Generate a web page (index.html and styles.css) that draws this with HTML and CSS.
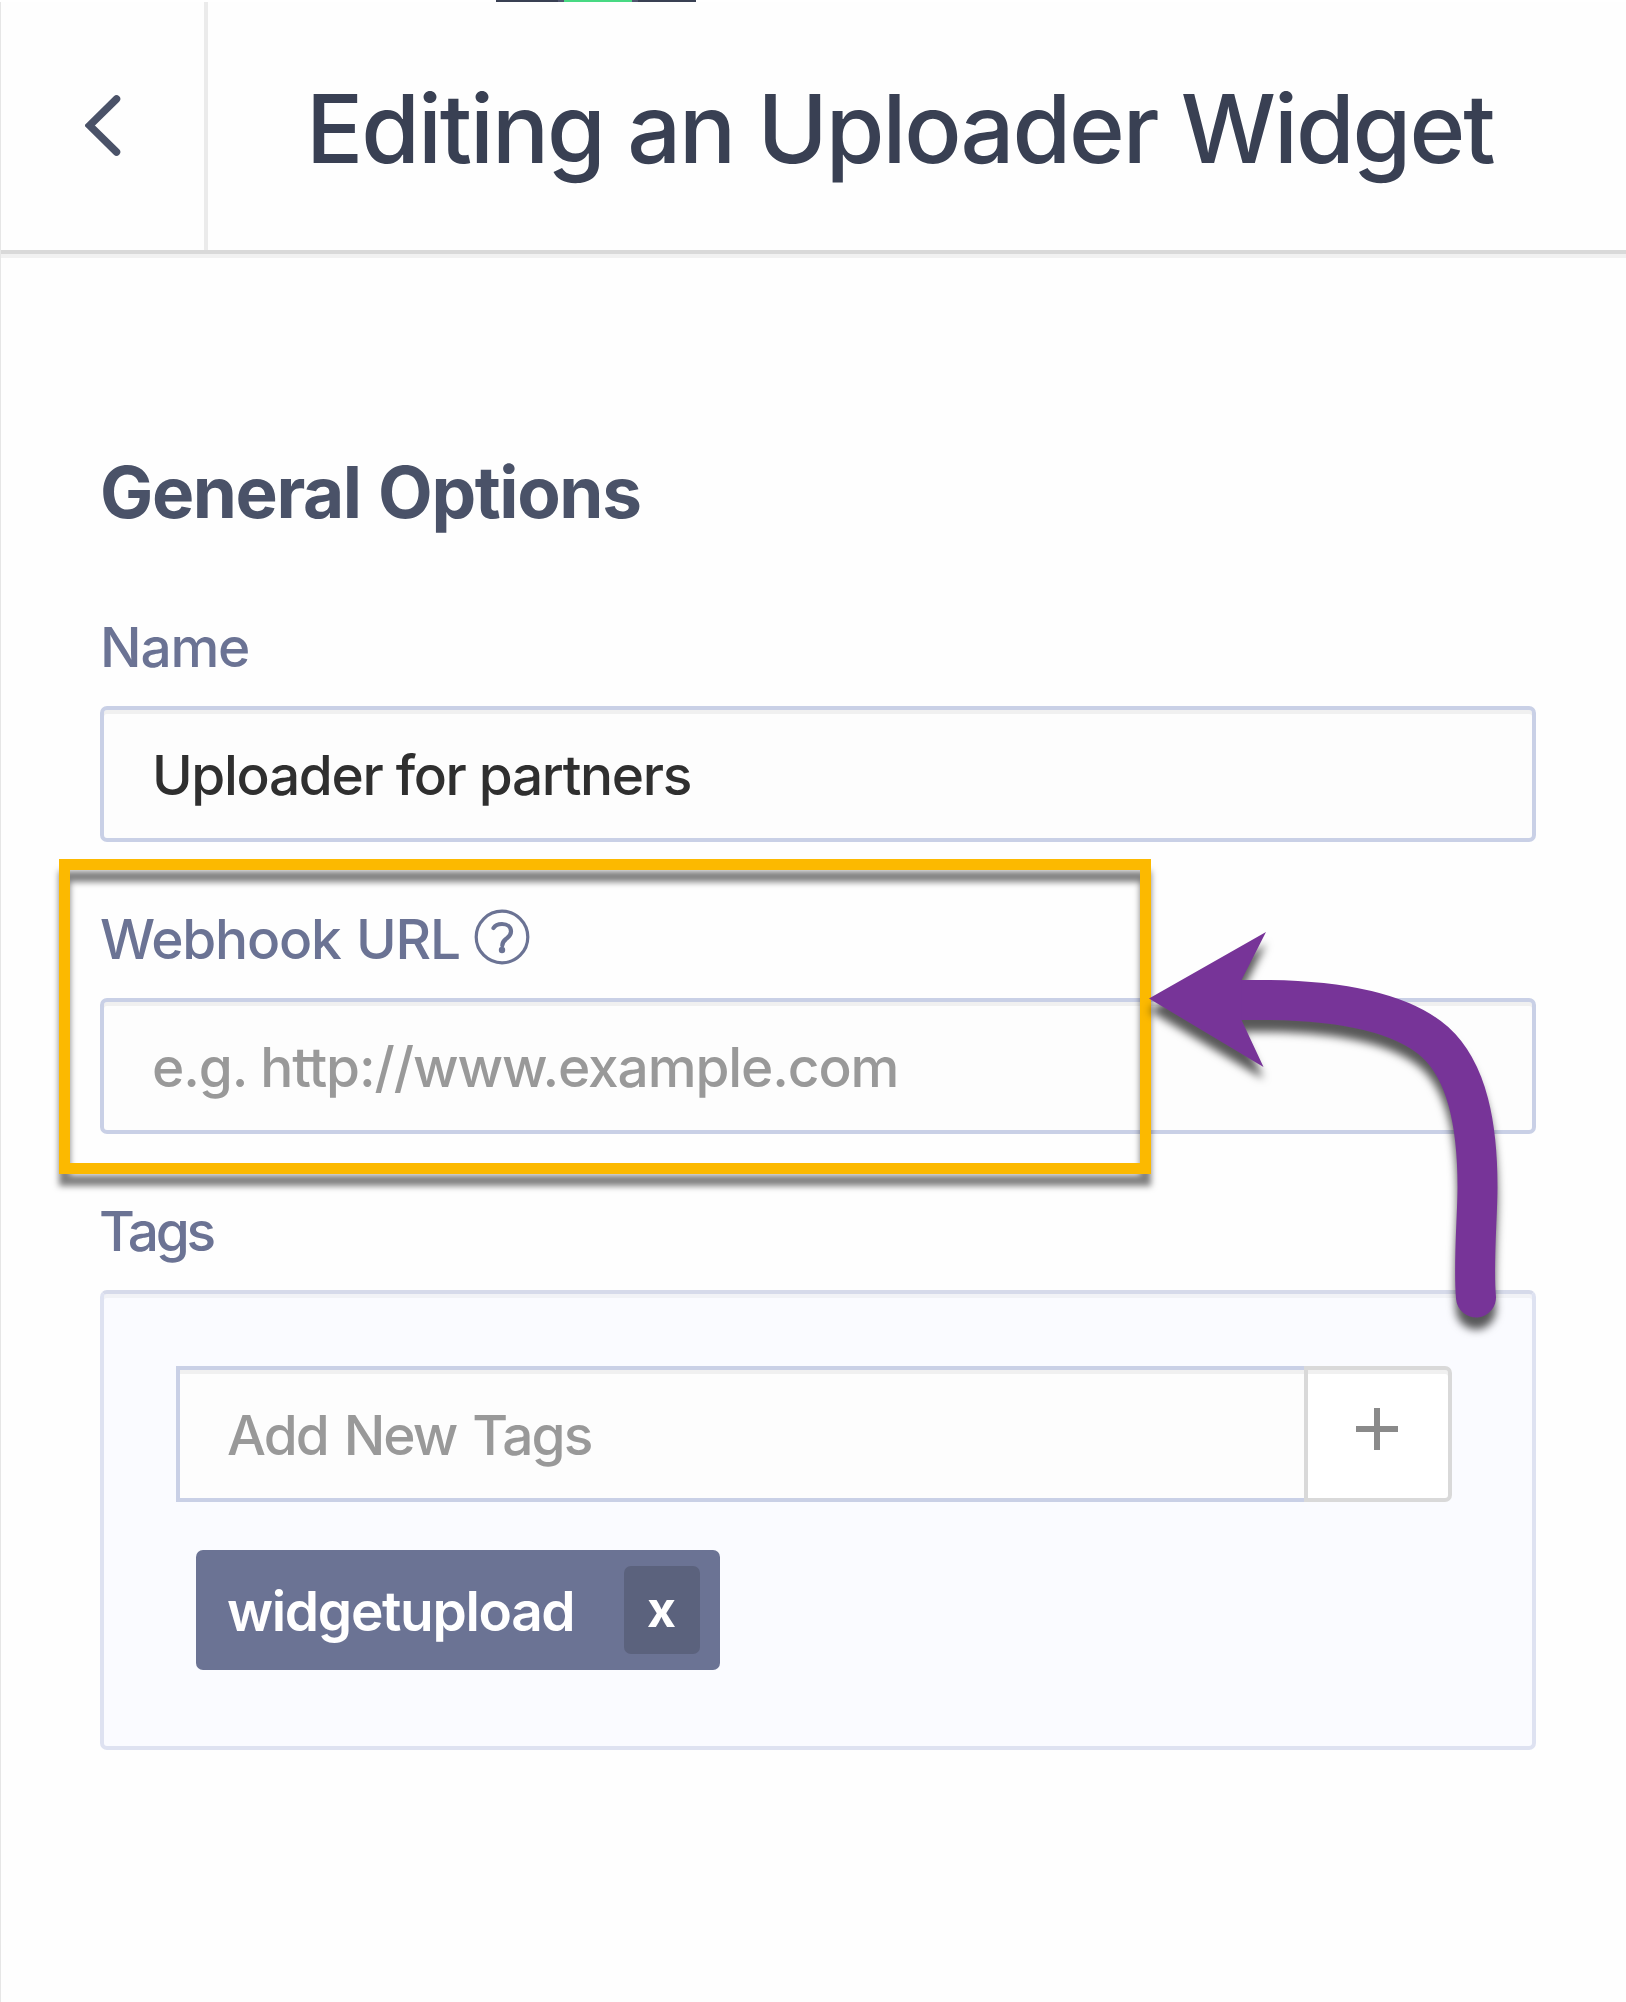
FILE: index.html
```
<!DOCTYPE html>
<html>
<head>
	<meta charset="utf-8">
	<title>Editing an Uploader Widget</title>
	<link rel="stylesheet" href="styles.css">
</head>
<body>
	<div class="topbar">
		<span class="topbar-on"></span>
	</div>
	<div class="panel">
		<header class="header">
			<a class="back">
				<svg width="36" height="62" viewBox="0 0 36 62">
					<path d="M31.5 4L4.5 30.500l27 26.500" />
				</svg>
			</a>
			<h1 class="title">Editing an Uploader Widget</h1>
		</header>
		<form class="options">
			<h2 class="heading">General Options</h2>
			<div class="field">
				<label class="label label-name" for="name">Name</label>
				<input class="input input-name" type="text" id="name" value="Uploader for partners">
			</div>
			<div class="field">
				<label class="label label-url" for="url">
					Webhook URL
					<svg class="help" width="56" height="56" viewBox="0 0 56 56">
						<circle cx="28" cy="28" r="25.800" />
						<path class="mark" d="M19.500 19C21 16.500 24 15 28 15c5.500 0 9 3 9 7.500 0 4-2.500 5.500-5 7.500s-3.700 3.500-3.700 6.500" />
						<circle class="dot" cx="28" cy="41" r="3.200" />
					</svg>
				</label>
				<input class="input input-url" type="text" id="url" placeholder="e.g. http://www.example.com">
				<div class="highlight"></div>
				<svg class="arrow" width="400" height="460" viewBox="1130 910 400 460">
					<path class="arrow-line" d="M1238 1000H1270C1335 1001 1400 1011 1435 1042C1468 1072 1477.500 1127 1477.500 1187C1477.500 1217 1473 1264 1476 1297.500" />
					<path class="arrow-head" d="M1149 998.500L1266 932L1241.500 980V1020L1263.500 1067Z" />
				</svg>
			</div>
			<div class="field">
				<label class="label label-tags" for="tags">Tags</label>
				<div class="tags">
					<div class="tags-add">
						<input class="input input-tags" type="text" id="tags" placeholder="Add New Tags">
						<button class="plus" type="button">
							<svg width="42" height="42" viewBox="0 0 42 42">
								<path d="M21 0V42M0 21H42" />
							</svg>
						</button>
					</div>
					<span class="tag">
						<span class="tag-name">widgetupload</span>
						<button class="tag-remove" type="button">x</button>
					</span>
				</div>
			</div>
		</form>
	</div>
</body>
</html>
```
FILE: styles.css
```
* {
	box-sizing: border-box;
}
body {
	margin: 0;
	background: #fff;
	font-family: Inter, "Liberation Sans", sans-serif;
	font-weight: 500;
	overflow: hidden;
}
.topbar {
	width: 200px;
	height: 2px;
	margin-left: 496px;
	background: #394053;
}
.topbar-on {
	display: block;
	width: 68px;
	height: 2px;
	margin-left: 68px;
	background: #48d983;
	box-shadow: -6px 0 #50556f, 6px 0 #50556f;
}
.panel {
	height: 2000px;
	border-left: 1px solid #e6e6e6;
	background: #fefefe;
}
.header {
	display: flex;
	height: 252px;
	border-bottom: 4px solid #d9d9d9;
	box-shadow: 0 4px #f1f1f1;
}
.back {
	display: flex;
	align-items: center;
	width: 207px;
	padding-left: 84px;
	border-right: 4px solid #ebebeb;
}
.back svg {
	fill: none;
	stroke: #4a5268;
	stroke-width: 7.5;
	stroke-linecap: round;
}
.title {
	margin: 0 0 0 98px;
	color: #394053;
	font-size: 95px;
	font-weight: 500;
	letter-spacing: -2.05px;
	line-height: 253px;
	white-space: nowrap;
}
.options {
	padding: 193px 90px 0 99px;
}
.heading {
	margin: 0 0 69px;
	color: #4a5268;
	font-size: 71px;
	font-weight: 700;
	letter-spacing: -1.4px;
	word-spacing: 2px;
	line-height: 90px;
}
.field {
	position: relative;
	margin-bottom: 56px;
}
.label {
	display: flex;
	align-items: center;
	height: 100px;
	padding-bottom: 19px;
	color: #6b7394;
	font-size: 55px;
	letter-spacing: -1.2px;
	word-spacing: 2px;
	white-space: nowrap;
}
.label-tags {
	letter-spacing: -3.2px;
	text-indent: -1px;
}
.help {
	margin: 0 0 3px 14px;
	fill: none;
	stroke: #6b7394;
	stroke-width: 3.200;
}
.help .mark {
	stroke-width: 4.2;
	stroke-linecap: round;
}
.help .dot {
	fill: #6b7394;
	stroke: none;
}
.input {
	display: block;
	width: 100%;
	height: 136px;
	padding: 2px 48px 0;
	border: 4px solid #c9d0e6;
	border-radius: 7px;
	background: #fdfdfd;
	box-shadow: inset 0 4px #f0f0f0;
	color: #2f2f2f;
	font: inherit;
	font-size: 55px;
	letter-spacing: -1.35px;
}
.input::placeholder {
	color: #999;
	opacity: 1;
}
.input-url {
	letter-spacing: -1.1px;
}
.tags {
	height: 460px;
	padding: 72px 80px 0 72px;
	border: 4px solid #dee2f1;
	border-top-color: #d6daea;
	border-radius: 7px;
	background: #fafbff;
	box-shadow: inset 0 4px #f1f2f6;
}
.tags-add {
	display: flex;
}
.input-tags {
	flex: 1;
	min-width: 0;
	padding-left: 47px;
	border-right: 0;
	border-radius: 0;
	letter-spacing: -1.9px;
	word-spacing: 3px;
}
.plus {
	width: 148px;
	height: 136px;
	padding: 0 2px 10px 0;
	border: 4px solid #d9d9d9;
	border-radius: 0 7px 7px 0;
	background: #fff;
	box-shadow: inset 0 4px #f0f0f0;
}
.plus svg {
	display: block;
	margin: auto;
	stroke: #8a8a8a;
	stroke-width: 6;
}
.tag {
	display: flex;
	align-items: center;
	justify-content: space-between;
	width: 524px;
	height: 120px;
	margin: 48px 0 0 20px;
	padding: 0 20px 0 31px;
	border-radius: 7px;
	background: #6b7394;
	color: #fff;
	font-size: 55px;
	font-weight: 600;
	letter-spacing: -1.35px;
}
.tag-name {
	padding-top: 2px;
}
.tag-remove {
	width: 76px;
	height: 88px;
	padding: 0 1px 3px 0;
	border: 0;
	border-radius: 7px;
	background: #5b627d;
	color: #fff;
	font: inherit;
	font-size: 50px;
	font-weight: 700;
}
/* callout around the webhook field */
.highlight {
	position: absolute;
	left: -41px;
	top: -39px;
	width: 1092px;
	height: 315px;
	border: 11px solid #fcb900;
	filter: drop-shadow(0 12px 3px rgba(0, 0, 0, .5));
	pointer-events: none;
}
.arrow {
	position: absolute;
	left: 1030px;
	top: 12px;
	z-index: 2;
	filter: drop-shadow(0 12px 4px rgba(0, 0, 0, .65));
	pointer-events: none;
}
.arrow-line {
	fill: none;
	stroke: #773498;
	stroke-width: 40;
	stroke-linecap: round;
}
.arrow-head {
	fill: #773498;
}
```
